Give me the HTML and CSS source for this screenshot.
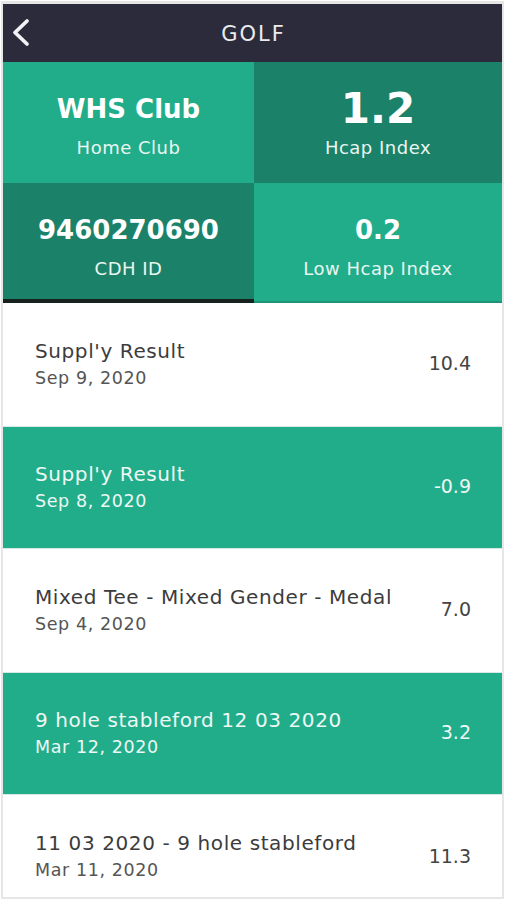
FILE: index.html
```html
<!DOCTYPE html>
<html lang="en">
<head>
    <meta charset="UTF-8">
    <meta name="viewport" content="width=device-width, initial-scale=1.0">
    <title>Golf</title>
    <link rel="stylesheet" href="styles.css">
</head>
<body>
    <div class="screen">
        <div class="top-bar">
            <svg class="back-icon" width="24" height="30" viewBox="0 0 24 30">
                <path d="M15 3 L3 14.5 L15 26" fill="none" stroke="#f2f2f4" stroke-width="3.8" stroke-linecap="round" stroke-linejoin="round"/>
            </svg>
            <span class="title">GOLF</span>
        </div>

        <div class="stats">
            <div class="stat light">
                <div class="stat-value">WHS Club</div>
                <div class="stat-label">Home Club</div>
            </div>
            <div class="stat dark">
                <div class="stat-value big">1.2</div>
                <div class="stat-label">Hcap Index</div>
            </div>
            <div class="stat dark selected">
                <div class="stat-value">9460270690</div>
                <div class="stat-label">CDH ID</div>
            </div>
            <div class="stat light bottom">
                <div class="stat-value">0.2</div>
                <div class="stat-label">Low Hcap Index</div>
            </div>
        </div>

        <div class="results">
            <div class="result">
                <div class="result-text">
                    <div class="result-name">Suppl'y Result</div>
                    <div class="result-date">Sep 9, 2020</div>
                </div>
                <div class="result-score">10.4</div>
            </div>
            <div class="result green">
                <div class="result-text">
                    <div class="result-name">Suppl'y Result</div>
                    <div class="result-date">Sep 8, 2020</div>
                </div>
                <div class="result-score">-0.9</div>
            </div>
            <div class="result">
                <div class="result-text">
                    <div class="result-name">Mixed Tee - Mixed Gender - Medal</div>
                    <div class="result-date">Sep 4, 2020</div>
                </div>
                <div class="result-score">7.0</div>
            </div>
            <div class="result green">
                <div class="result-text">
                    <div class="result-name">9 hole stableford 12 03 2020</div>
                    <div class="result-date">Mar 12, 2020</div>
                </div>
                <div class="result-score">3.2</div>
            </div>
            <div class="result last">
                <div class="result-text">
                    <div class="result-name">11 03 2020 - 9 hole stableford</div>
                    <div class="result-date">Mar 11, 2020</div>
                </div>
                <div class="result-score">11.3</div>
            </div>
        </div>
    </div>
</body>
</html>
```

FILE: styles.css
```css
body {
    margin: 0;
    padding: 1px 4px 1px 1px;
    background-color: #ffffff;
    font-family: "DejaVu Sans", Arial, sans-serif;
}

.screen {
    border: 2px solid #e6e6e6;
    border-top-width: 3px;
    height: 893px;
    overflow: hidden;
    background-color: #fff;
}

.top-bar {
    height: 58px;
    background-color: #2c2b3c;
    display: flex;
    align-items: center;
    justify-content: center;
    position: relative;
}

.back-icon {
    position: absolute;
    left: 9px;
    top: 14px;
}

.title {
    color: #ebebee;
    font-size: 21px;
    letter-spacing: 2px;
    margin: 2px 0 0 2px;
}

.stats {
    display: grid;
    grid-template-columns: 251px 1fr;
    grid-template-rows: 121px 120px;
}

.stat {
    display: flex;
    flex-direction: column;
    align-items: center;
    padding-top: 27px;
    color: #ffffff;
    box-sizing: border-box;
}

.light {
    background-color: #21ad8a;
}

.dark {
    background-color: #1b8269;
}

.selected {
    border-bottom: 4px solid #17221f;
}

.bottom {
    border-bottom: 2px solid #1c9477;
}

.stat-value {
    font-size: 26px;
    font-weight: bold;
    line-height: 40px;
}

.stat-value.big {
    font-size: 42px;
    line-height: 48px;
    margin-top: -4px;
    margin-bottom: -4px;
}

.stat-label {
    font-size: 18px;
    letter-spacing: 0.5px;
    line-height: 24px;
    margin-top: 7px;
    color: #e9f6f1;
}

.result {
    height: 123px;
    display: flex;
    align-items: center;
    justify-content: space-between;
    padding: 0 31px 3px 32px;
    box-sizing: border-box;
    color: #3c3c3c;
}

.result.green {
    background-color: #21ad8a;
    color: #eef8f4;
    border-top: 1px solid #d8e8e2;
    border-bottom: 1px solid #d8e8e2;
}

.result.last {
    height: 104px;
    padding-top: 17px;
    padding-bottom: 0;
}

.result-name {
    font-size: 20px;
    letter-spacing: 0.6px;
    line-height: 26px;
}

.result-date {
    font-size: 17.5px;
    letter-spacing: 0.6px;
    line-height: 22px;
    margin-top: 3px;
    color: #555555;
}

.green .result-date {
    color: #eef8f4;
}

.result-score {
    font-size: 19px;
    color: #444444;
}

.green .result-score {
    color: #eef8f4;
}
```
